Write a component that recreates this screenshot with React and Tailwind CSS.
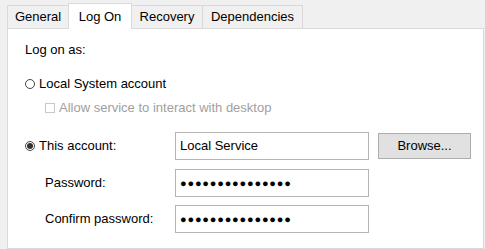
import React from 'react';

const tabs = [
    { label: 'General', w: 'w-[62px]' },
    { label: 'Log On', w: 'w-[64px]', active: true },
    { label: 'Recovery', w: 'w-[72px]' },
    { label: 'Dependencies', w: 'w-[101px]' },
];

const Radio = ({ checked }) => (
    <span className="w-[10px] h-[10px] rounded-full border border-[#444444] bg-white flex items-center justify-center shrink-0">
        {checked && <span className="w-[6px] h-[6px] rounded-full bg-[#333333]" />}
    </span>
);

const Field = ({ children, className = '' }) => (
    <div className={`w-[194px] h-[28px] border border-[#b4b4b4] bg-white flex items-center pl-[4px] ${className}`}>
        {children}
    </div>
);

const Dots = () => (
    <span className="text-[11px] tracking-[0.8px] text-black leading-none">{'●'.repeat(15)}</span>
);

export default function App() {
    return (
        <div className="w-[485px] h-[249px] bg-[#f0f0f0] overflow-hidden flex flex-col text-[13px] text-black font-['Liberation_Sans',Arial,sans-serif]">
            {/* Tab strip */}
            <div className="h-[28px] pl-[7px] flex items-end relative z-10">
                {tabs.map((t, i) =>
                    t.active ? (
                        <div key={t.label} className={`${t.w} h-[26px] -ml-px bg-white border border-b-0 border-[#d9d9d9] flex justify-center pt-[3px] translate-y-px`}>
                            {t.label}
                        </div>
                    ) : (
                        <div key={t.label} className={`${t.w} h-[23px] border border-b-0 border-[#d9d9d9] bg-[#f0f0f0] flex items-center justify-center ${i > 0 ? '-ml-px' : ''}`}>
                            {t.label}
                        </div>
                    )
                )}
            </div>

            {/* Panel */}
            <div className="flex-1 ml-[7px] mr-[1px] bg-white border border-[#d9d9d9] pl-[17px] pt-[13px]">
                <div className="h-[16px] leading-[16px]">Log on as:</div>

                <div className="mt-[18px] flex items-center gap-[4px] h-[16px]">
                    <Radio />
                    <span>Local System account</span>
                </div>

                <div className="mt-[8px] ml-[20px] flex items-center gap-[4px] h-[16px] text-[#a0a0a0]">
                    <span className="w-[10px] h-[10px] border border-[#c8c8c8] bg-white shrink-0" />
                    <span>Allow service to interact with desktop</span>
                </div>

                <div className="mt-[16px] flex items-center">
                    <div className="w-[150px] flex items-center gap-[4px]">
                        <Radio checked />
                        <span>This account:</span>
                    </div>
                    <Field>Local Service</Field>
                    <button className="ml-[9px] w-[93px] h-[26px] bg-[#e1e1e1] border border-[#adadad] text-center">
                        Browse...
                    </button>
                </div>

                <div className="mt-[9px] flex items-center">
                    <div className="w-[150px] pl-[20px]">Password:</div>
                    <Field><Dots /></Field>
                </div>

                <div className="mt-[8px] flex items-center">
                    <div className="w-[150px] pl-[20px]">Confirm password:</div>
                    <Field><Dots /></Field>
                </div>
            </div>
        </div>
    );
}
